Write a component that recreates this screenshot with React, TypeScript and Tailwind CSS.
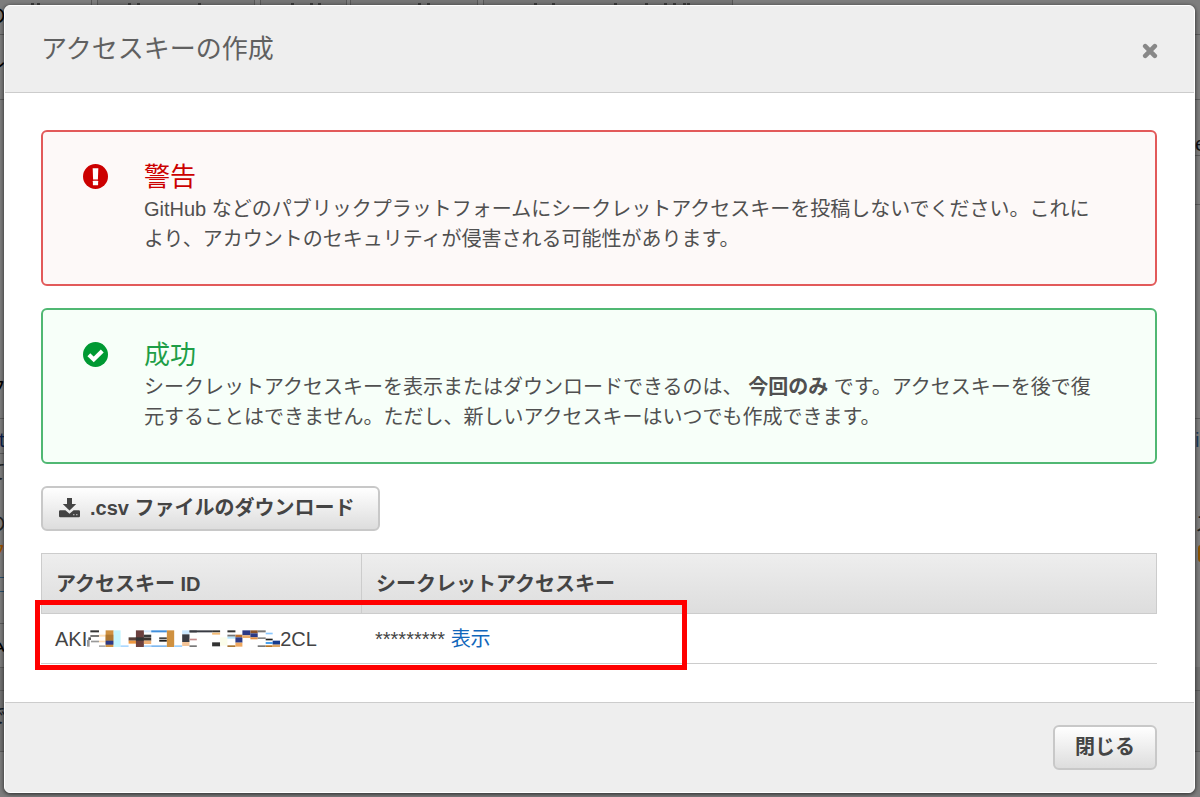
import type { ReactNode } from "react";

type Fragment = { text: string; className: string };

const backdropFragments: Fragment[] = [
  { text: "の", className: "-left-3.5 top-0 text-black" },
  { text: "レ", className: "-left-3.5 top-12 text-black" },
  { text: "ク", className: "-left-3.5 top-93 text-black" },
  { text: "t", className: "-left-px top-106 text-[#0b1f4d]" },
  { text: "て", className: "-left-3.5 top-114 text-[#222222]" },
  { text: "の", className: "-left-3.5 top-127 text-[#222222]" },
  { text: "ク", className: "-left-3.5 top-134 text-[#9a5200]" },
  { text: "ム", className: "-left-3.5 top-157 text-black" },
  { text: "で", className: "-left-3.5 top-175 text-[#111a26]" },
  { text: "e", className: "left-[1195px] top-32 text-[#111111]" },
  { text: "i", className: "left-[1195px] top-106 text-[#1d3d5c]" },
  { text: "ス", className: "left-[1195px] top-127 text-[#222222]" },
];

const leftRules = [34, 99, 418, 453, 623, 667, 690, 751];
const rightRules = [34, 99, 155, 204, 418, 690, 751];
const tabEdges = [91, 97, 254, 260, 346, 350, 477, 483, 732];

// Top edges of the tab captions that stay visible above the dialog.
const tabMarks = [31, 37, 128, 137, 198, 291, 310, 318, 418, 427, 534, 552, 614, 645, 664, 673, 683, 687];

function Backdrop() {
  return (
    <div aria-hidden="true" className="absolute inset-0 overflow-hidden bg-[#7d7d7d] text-xl">
      <svg className="absolute inset-0 h-full w-full">
        <rect x="0" y="667" width="100%" height="84" fill="#717171" />
        <rect x="97" y="0" width="157" height="5" fill="#747474" />
        <rect x="260" y="0" width="86" height="5" fill="#747474" />
        <rect x="350" y="0" width="127" height="5" fill="#747474" />
        <rect x="483" y="0" width="249" height="5" fill="#747474" />
        {tabEdges.map((x) => (
          <rect key={x} x={x} y="0" width="1" height="5" fill="#585858" />
        ))}
        {tabMarks.map((x) => (
          <rect key={x} x={x} y="3" width="3" height="2" fill="#3c3c3c" />
        ))}
        {leftRules.map((y) => (
          <rect key={y} x="0" y={y} width="5" height="1" fill="#5c5c5c" />
        ))}
        {rightRules.map((y) => (
          <rect key={y} x="1194" y={y} width="6" height="1" fill="#5c5c5c" />
        ))}
        <rect x="0" y="577" width="4" height="1" fill="#28506e" />
        <rect x="0" y="591" width="4" height="1" fill="#28506e" />
        <rect x="1198" y="545" width="6" height="17" rx="3" fill="#8a5200" />
      </svg>
      {backdropFragments.map((f, i) => (
        <span key={i} className={`absolute leading-8 ${f.className}`}>
          {f.text}
        </span>
      ))}
    </div>
  );
}

function WarningIcon() {
  return (
    <svg viewBox="0 0 24 24" className="h-[25px] w-[25px]" aria-hidden="true">
      <circle cx="12" cy="12" r="12" fill="#cc0000" />
      <path d="M9.300 4h5.400l-.4 10.800H9.700z" fill="#fff" />
      <rect x="9.500" y="16" width="5" height="4.400" rx=".5" fill="#fff" />
    </svg>
  );
}

function SuccessIcon() {
  return (
    <svg viewBox="0 0 24 24" className="h-[25px] w-[25px]" aria-hidden="true">
      <circle cx="12" cy="12" r="12" fill="#009933" />
      <path d="M5.6 12.2l4.7 4.6 8.2-8.2" fill="none" stroke="#fff" strokeWidth="3.9" />
    </svg>
  );
}

function DownloadIcon() {
  return (
    <svg viewBox="0 0 21 20" className="h-5 w-[21px]" aria-hidden="true">
      <path d="M8 0h5v6h4.2L10.5 12.6 3.8 6H8z" fill="#444" />
      <path d="M1.2 12.3h5.2l4.1 3.4 4.1-3.4h5.2q1.2 0 1.2 1.2v4.6q0 1.2-1.2 1.2H1.2Q0 19.300 0 18.100v-4.600q0-1.200 1.200-1.200z" fill="#444" />
      <rect x="14" y="16" width="1.500" height="1.300" fill="#aaa" />
      <rect x="17" y="16" width="1.500" height="1.300" fill="#aaa" />
    </svg>
  );
}

function CloseIcon() {
  return (
    <svg viewBox="0 0 16 16" className="h-4 w-4" aria-hidden="true">
      <path d="M3.200 3.200l9.600 9.600M12.800 3.200l-9.600 9.600" stroke="#888" strokeWidth="4.600" strokeLinecap="round" />
    </svg>
  );
}

type Block = [x: number, y: number, w: number, h: number, color: string];

const mosaic: Block[] = [
  [14, 38, 8, 8, "#555555"],
  [10, 46, 8, 20, "#9a9a9a"],
  [20, 17, 26, 6, "#333333"],
  [20, 31, 26, 6, "#777777"],
  [22, 48, 24, 5, "#999999"],
  [46, 62, 20, 5, "#aaaaaa"],
  [46, 30, 20, 6, "#ffe0b8"],
  [46, 48, 20, 5, "#ffe0b8"],
  [66, 17, 24, 50, "#cf9140"],
  [66, 30, 24, 18, "#b07830"],
  [66, 48, 24, 12, "#2c3a86"],
  [90, 17, 21, 50, "#c4f6ff"],
  [111, 62, 24, 5, "#add9ff"],
  [135, 38, 24, 10, "#58423c"],
  [135, 48, 24, 9, "#ee9840"],
  [157, 17, 24, 50, "#6b403e"],
  [157, 38, 24, 10, "#333333"],
  [181, 17, 22, 6, "#d5eaff"],
  [181, 30, 22, 7, "#3a3a3a"],
  [181, 38, 22, 10, "#3c3430"],
  [181, 48, 22, 10, "#eeb178"],
  [181, 62, 22, 5, "#a9d5ff"],
  [203, 17, 47, 6, "#418fdb"],
  [227, 38, 23, 6, "#444444"],
  [227, 46, 23, 5, "#202020"],
  [203, 62, 47, 5, "#7eb8ef"],
  [250, 17, 22, 50, "#cf9140"],
  [272, 62, 24, 5, "#9bd0ff"],
  [296, 17, 22, 12, "#cbe8ff"],
  [296, 29, 22, 23, "#393b43"],
  [296, 52, 22, 12, "#f3c498"],
  [318, 17, 22, 7, "#888888"],
  [318, 42, 22, 5, "#c48c8c"],
  [318, 62, 22, 5, "#777777"],
  [318, 17, 68, 6, "#393b43"],
  [386, 17, 24, 6, "#333333"],
  [386, 24, 24, 6, "#f5bd78"],
  [386, 53, 24, 12, "#333333"],
  [410, 38, 22, 25, "#fbfdea"],
  [432, 17, 24, 6, "#333333"],
  [432, 30, 24, 6, "#777777"],
  [432, 36, 24, 6, "#b3e5ff"],
  [432, 62, 24, 5, "#aa7733"],
  [456, 30, 21, 8, "#b97030"],
  [456, 38, 21, 16, "#2c3a86"],
  [456, 54, 21, 12, "#efa860"],
  [477, 17, 24, 15, "#2c3a86"],
  [477, 32, 24, 8, "#edad6a"],
  [501, 17, 22, 9, "#8a5128"],
  [501, 26, 22, 12, "#2c3a86"],
  [501, 38, 22, 6, "#e79040"],
  [523, 17, 24, 6, "#777777"],
  [523, 38, 24, 5, "#888888"],
  [523, 62, 24, 5, "#777777"],
  [547, 24, 21, 5, "#8ac8ff"],
  [547, 42, 21, 5, "#202020"],
  [547, 52, 21, 6, "#4aa1ee"],
  [547, 62, 21, 5, "#b9731f"],
  [568, 48, 23, 12, "#173c8e"],
  [568, 60, 23, 7, "#dfa662"],
];

function RedactedKey() {
  return (
    <span className="flex items-center whitespace-nowrap">
      AKI
      <svg viewBox="10 16 580 51" className="h-[17px] w-[193px]" aria-hidden="true">
        {mosaic.map(([x, y, w, h, color], i) => (
          <rect key={i} x={x} y={y} width={w} height={h} fill={color} />
        ))}
      </svg>
      2CL
    </span>
  );
}

type AlertProps = {
  icon: ReactNode;
  title: string;
  boxClass: string;
  titleClass: string;
  children: ReactNode;
};

function Alert({ icon, title, boxClass, titleClass, children }: AlertProps) {
  return (
    <section className={`flex items-start rounded-md border-2 pt-7 pr-12 pb-[30px] pl-10 ${boxClass}`}>
      <div className="mr-9 shrink-0 pt-1">{icon}</div>
      <div>
        <h2 className={`text-[26px] leading-[34px] ${titleClass}`}>{title}</h2>
        <p className="text-xl leading-[30px] text-[#505050]">{children}</p>
      </div>
    </section>
  );
}

const buttonClass =
  "flex h-[45px] items-center rounded-md border-2 border-[#c8c8c8] bg-linear-to-b from-white to-[#dddddd] pb-0.5 text-xl font-bold text-[#444444]";

export default function App() {
  return (
    <main
      lang="ja"
      className="relative flex min-h-screen flex-col pt-[5px] pr-[5px] pb-[4px] pl-[4px] font-['Liberation_Sans','Noto_Sans_CJK_JP',sans-serif] text-[#444444]"
    >
      <Backdrop />
      <div
        role="dialog"
        aria-labelledby="dialog-title"
        className="relative flex grow flex-col overflow-hidden rounded-md border border-white bg-white shadow-[0_1px_4px_rgba(0,0,0,0.7)]"
      >
        <header className="flex h-[87px] items-center justify-between border-b border-[#cccccc] bg-[#eeeeee] pr-9 pl-9">
          <h1 id="dialog-title" className="text-[26px] leading-9 text-[#606060]">
            アクセスキーの作成
          </h1>
          <button type="button" aria-label="閉じる" className="pt-1">
            <CloseIcon />
          </button>
        </header>

        <div className="flex grow flex-col gap-[22px] pt-[37px] pr-[37px] pb-9 pl-9">
          <Alert
            icon={<WarningIcon />}
            title="警告"
            boxClass="border-[#e25a5a] bg-[#fdf9f8]"
            titleClass="text-[#cc0000]"
          >
            GitHub などのパブリックプラットフォームにシークレットアクセスキーを投稿しないでください。これにより、アカウントのセキュリティが侵害される可能性があります。
          </Alert>
          <Alert
            icon={<SuccessIcon />}
            title="成功"
            boxClass="border-[#50b873] bg-[#f7fff9]"
            titleClass="text-[#1e9e47]"
          >
            シークレットアクセスキーを表示またはダウンロードできるのは、 <strong>今回のみ</strong>{" "}
            です。アクセスキーを後で復元することはできません。ただし、新しいアクセスキーはいつでも作成できます。
          </Alert>

          <button type="button" className={`${buttonClass} gap-2.5 self-start pr-6 pl-4`}>
            <DownloadIcon />
            <span>.csv ファイルのダウンロード</span>
          </button>

          <div className="relative">
            <table className="w-full border-separate border-spacing-0 text-left text-xl">
              <thead>
                <tr className="h-[61px] bg-linear-to-b from-[#eeeeee] to-[#dddddd]">
                  <th scope="col" className="w-[320px] border border-r-0 border-[#cccccc] px-3.5">
                    アクセスキー ID
                  </th>
                  <th scope="col" className="border border-[#cccccc] px-3.5">
                    シークレットアクセスキー
                  </th>
                </tr>
              </thead>
              <tbody>
                <tr className="h-[50px]">
                  <td className="border-b border-[#cccccc] px-3.5">
                    <RedactedKey />
                  </td>
                  <td className="border-b border-[#cccccc] px-3.5">
                    *********{" "}
                    <a href="#show" className="text-[#1166bb]">
                      表示
                    </a>
                  </td>
                </tr>
              </tbody>
            </table>
            <div
              aria-hidden="true"
              className="pointer-events-none absolute top-[47px] -left-1.5 h-[70px] w-[652px] border-5 border-[#ff0000]"
            />
          </div>
        </div>

        <footer className="flex justify-end border-t border-[#cccccc] bg-[#eeeeee] py-[22px] pr-[37px] pl-9">
          <button type="button" className={`${buttonClass} px-5`}>
            閉じる
          </button>
        </footer>
      </div>
    </main>
  );
}
